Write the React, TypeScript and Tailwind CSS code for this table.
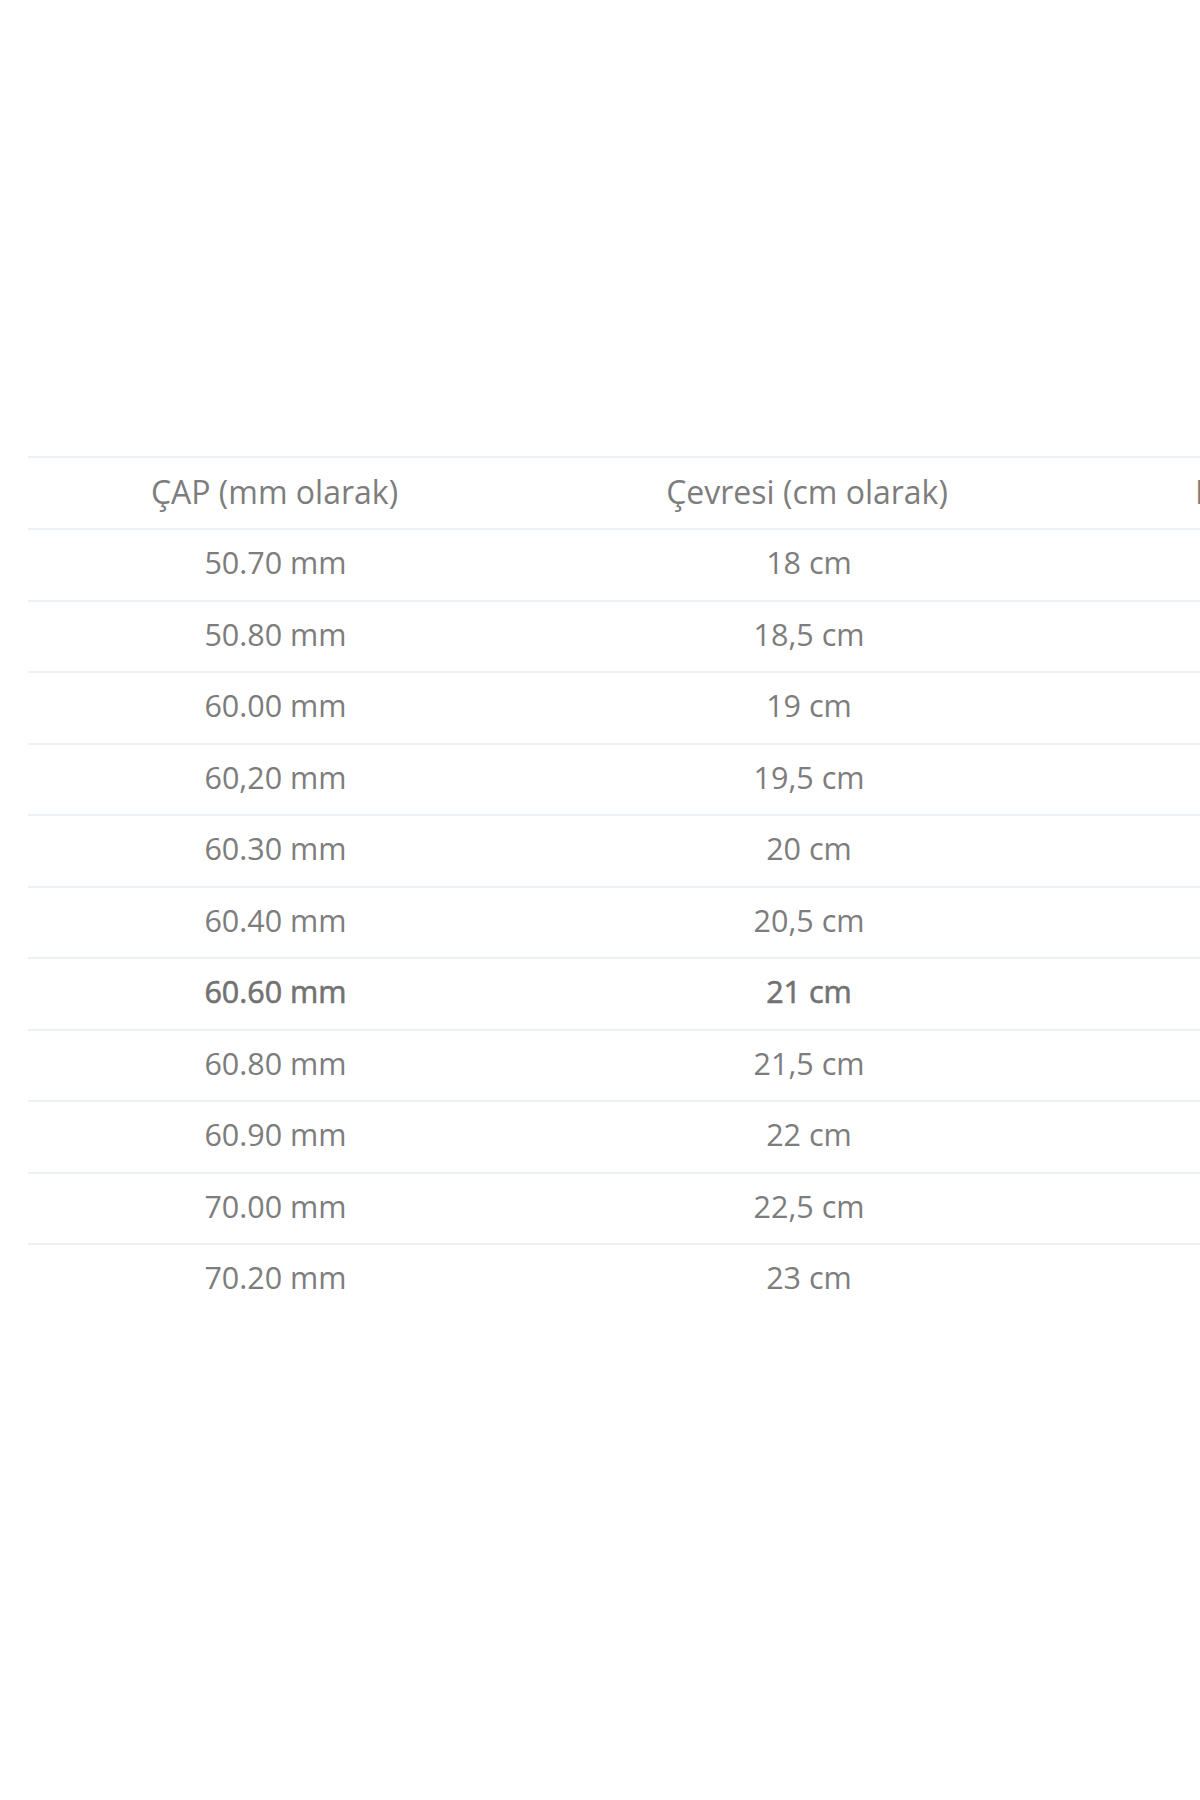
import React from "react";

const rows: [string, string, boolean?][] = [
  ["50.70 mm", "18 cm"],
  ["50.80 mm", "18,5 cm"],
  ["60.00 mm", "19 cm"],
  ["60,20 mm", "19,5 cm"],
  ["60.30 mm", "20 cm"],
  ["60.40 mm", "20,5 cm"],
  ["60.60 mm", "21 cm", true],
  ["60.80 mm", "21,5 cm"],
  ["60.90 mm", "22 cm"],
  ["70.00 mm", "22,5 cm"],
  ["70.20 mm", "23 cm"],
];

export default function App() {
  return (
    <div
      className="w-[1200px] h-[1800px] overflow-hidden bg-white"
      style={{ fontFamily: '"Open Sans", "Noto Sans", sans-serif' }}
    >
      <div className="pt-[456px] pl-[28px]">
        <div className="w-[1372px] text-[#7d7d7d]">
          <div className="grid grid-cols-[493px_572px_307px] h-[72px] pb-[2px] items-center border-t-2 border-[#edf0f5] text-[32px]">
            <div className="text-center whitespace-nowrap">ÇAP (mm olarak)</div>
            <div className="text-center whitespace-nowrap">Çevresi (cm olarak)</div>
            <div className="pl-[102px] whitespace-nowrap">Beden</div>
          </div>
          {rows.map(([a, b, bold], i) => (
            <div
              key={i}
              className={
                "grid grid-cols-[495px_572px_305px] h-[71.5px] pb-[3px] items-center border-t-2 border-[#edf0f5] text-[30.5px] " +
                (bold ? "text-[#727272] [-webkit-text-stroke:0.6px_#727272]" : "")
              }
            >
              <div className="text-center whitespace-nowrap">{a}</div>
              <div className="text-center whitespace-nowrap">{b}</div>
              <div className="whitespace-nowrap"></div>
            </div>
          ))}
        </div>
      </div>
    </div>
  );
}
